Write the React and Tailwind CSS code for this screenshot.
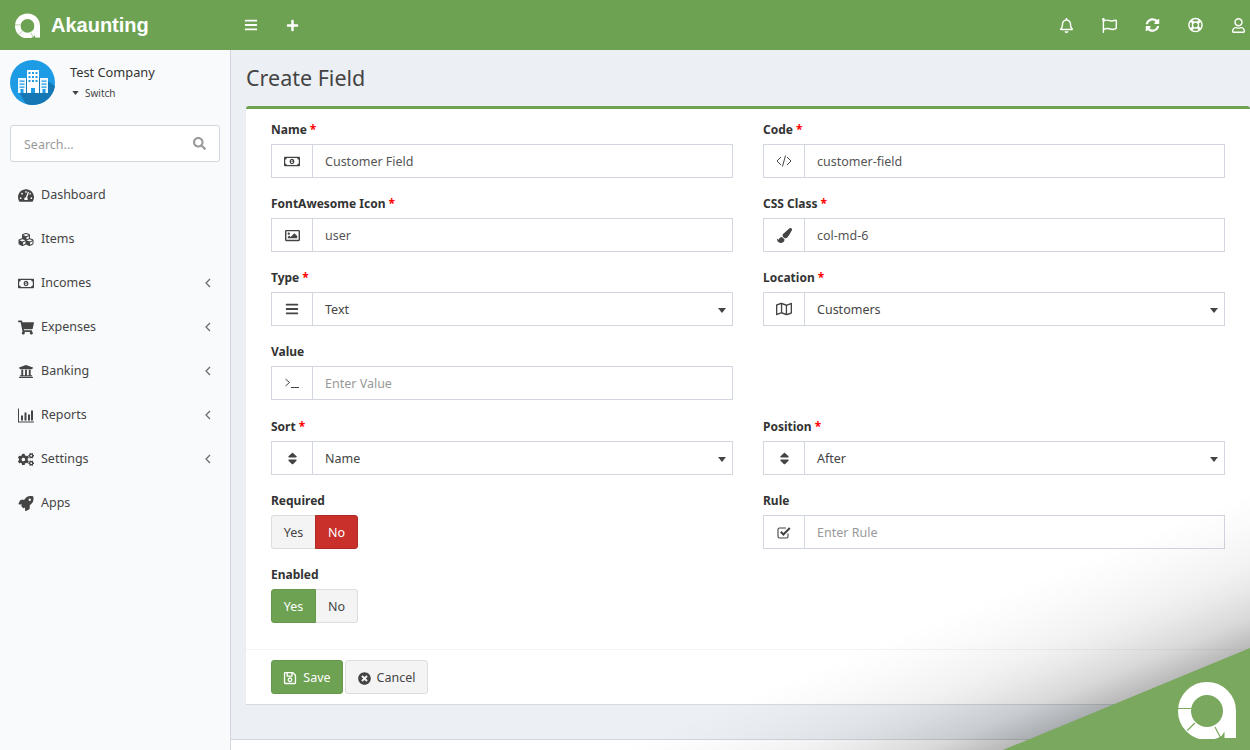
import {
  FaBars, FaPlus, FaRegBell, FaRegFlag, FaSyncAlt, FaRegLifeRing, FaRegUser, FaSearch,
  FaTachometerAlt, FaCubes, FaRegMoneyBillAlt, FaShoppingCart, FaUniversity, FaCogs, FaRocket,
  FaRegImage, FaPaintBrush, FaRegMap, FaSort, FaRegSave, FaTimesCircle,
} from "react-icons/fa";

function ChartIcon({ className }) {
  return (
    <svg viewBox="0 0 16 14" fill="currentColor" className={className}>
      <path d="M0 0h1v13h15v1H0zM3 7h2v5H3zM6.500 4h2v8h-2zM10 6h2v6h-2zM13 2h2v10h-2z" />
    </svg>
  );
}

function CodeIcon({ className }) {
  return (
    <svg viewBox="0 0 16 12" fill="none" stroke="currentColor" strokeWidth="1" className={className}>
      <path d="M5 2 1 6l4 4M11 2l4 4-4 4M9.500 0.500l-3 11" />
    </svg>
  );
}

function TerminalIcon({ className }) {
  return (
    <svg viewBox="0 0 14 10" fill="none" stroke="currentColor" strokeWidth="1" className={className}>
      <path d="M0.500 1 4.500 4.500l-4 3.500M6 9.500h8" />
    </svg>
  );
}

function CheckSquareIcon({ className }) {
  return (
    <svg viewBox="0 0 14 13" fill="none" stroke="currentColor" className={className}>
      <path d="M11 7.500V10.500a1.500 1.500 0 0 1-1.500 1.500h-7A1.500 1.500 0 0 1 1 10.500v-7A1.500 1.500 0 0 1 2.500 2H9" strokeWidth="1.100" />
      <path d="m3.800 5.800 2.600 2.700L12.800 2" strokeWidth="2" />
    </svg>
  );
}

function Caret({ className }) {
  return (
    <svg viewBox="0 0 8 5" fill="currentColor" className={className}>
      <path d="M0 0h8L4 5z" />
    </svg>
  );
}

function Chevron() {
  return (
    <svg viewBox="0 0 6 10" fill="none" stroke="#666" strokeWidth="1.200" className="h-[10px] w-[6px]">
      <path d="M5 1 1 5l4 4" />
    </svg>
  );
}

const MENU = [
  { label: "Dashboard", icon: FaTachometerAlt },
  { label: "Items", icon: FaCubes },
  { label: "Incomes", icon: FaRegMoneyBillAlt, more: true },
  { label: "Expenses", icon: FaShoppingCart, more: true },
  { label: "Banking", icon: FaUniversity, more: true },
  { label: "Reports", icon: ChartIcon, more: true },
  { label: "Settings", icon: FaCogs, more: true },
  { label: "Apps", icon: FaRocket },
];

function Logo({ className, cut }) {
  return (
    <svg viewBox="0 0 58 58" className={className}>
      <circle cx="29" cy="30" r="22.500" fill="none" stroke="#fff" strokeWidth="13" />
      <path d="M45 30h13v27H45z" fill="#fff" />
      <path d="M0 27.500h13M9.300 49.500l7.500-7.500M37 46l5.500 10.500" stroke={cut} strokeWidth="1.200" fill="none" />
      <path d="M41.500 58l5-7.500V58z" fill={cut} />
    </svg>
  );
}

function CompanyAvatar() {
  return (
    <svg viewBox="0 0 45 45" className="h-[45px] w-[45px] shrink-0">
      <circle cx="22.500" cy="22.500" r="22.500" fill="#1d9be4" />
      <path d="M8 30 24 10l6 8 9 4 6 4a22.500 22.500 0 0 1-22 19q-3 0-7-1z" fill="#1577b4" />
      <path d="M8 18h8v15H8zM30 18h8v15h-8z" fill="#eef7fd" />
      <path d="M17 10h12v23H17z" fill="#fff" />
      <path d="M18.500 12h2v2h-2zM22 12h2v2h-2zM25.500 12h2v2h-2zM18.500 16h2v2h-2zM22 16h2v2h-2zM25.500 16h2v2h-2zM18.500 20h2v2h-2zM22 20h2v2h-2zM25.500 20h2v2h-2z" fill="#1d9be4" />
      <path d="M21 28h4v5h-4zM10.500 29h3v4h-3zM32.500 29h3v4h-3zM9.500 20.500h5v1.200h-5zM9.500 23.500h5v1.200h-5zM9.500 26.500h5v1.200h-5zM31.500 20.500h5v1.200h-5zM31.500 23.500h5v1.200h-5zM31.500 26.500h5v1.200h-5z" fill="#1d9be4" />
    </svg>
  );
}

function Label({ text, required }) {
  return (
    <div className="mb-[5px] h-5 pt-px text-[12px] leading-5 font-bold text-[#333]">
      {text}
      {required && <span className="ml-[3px] text-[#f00]">*</span>}
    </div>
  );
}

function Field({ label, required, icon: Icon, iconClass = "h-[15px] w-[15px]", value, placeholder, select }) {
  return (
    <div className="mb-[15px]">
      <Label text={label} required={required} />
      <div className="flex h-[34px] border border-[#d2d6de] bg-white">
        <span className="flex w-[41px] shrink-0 items-center justify-center border-r border-[#d2d6de] text-[#444]">
          <Icon className={iconClass} />
        </span>
        {select ? (
          <div className="flex flex-1 items-center justify-between pt-[2px] pr-[6px] pl-3 text-[12.500px] text-[#444]">
            {value}
            <Caret className="h-[5px] w-[8px] text-[#444]" />
          </div>
        ) : (
          <input
            readOnly
            value={value ?? ""}
            placeholder={placeholder}
            className="min-w-0 flex-1 bg-transparent px-3 pt-[2px] text-[12.500px] text-[#555] outline-none placeholder:text-[#999]"
          />
        )}
      </div>
    </div>
  );
}

function Toggle({ label, on }) {
  return (
    <div className="mb-[15px]">
      <Label text={label} />
      <div className="flex h-[34px] w-[87px] text-[12.500px]">
        <span
          className={
            on
              ? "flex w-[45px] items-center justify-center rounded-l-[3px] border border-[#65974c] bg-[#6da252] pt-[2px] text-white"
              : "flex w-[44px] items-center justify-center rounded-l-[3px] border border-r-0 border-[#ddd] bg-[#f4f4f4] pt-[2px] text-[#444]"
          }
        >
          Yes
        </span>
        <span
          className={
            on
              ? "flex flex-1 items-center justify-center rounded-r-[3px] border border-l-0 border-[#ddd] bg-[#f4f4f4] pt-[2px] text-[#444]"
              : "flex flex-1 items-center justify-center rounded-r-[3px] border border-[#ac2925] bg-[#c9302c] pt-[2px] text-white"
          }
        >
          No
        </span>
      </div>
    </div>
  );
}

export default function App() {
  return (
    <div
      className="relative flex h-[750px] flex-col overflow-hidden bg-[#ecf0f5] text-[12.500px] text-[#444]"
      style={{ fontFamily: '"Noto Sans", sans-serif' }}
    >
      <header className="flex h-[50px] shrink-0 items-center bg-[#6da252] text-white">
        <div className="flex w-[230px] items-center pl-[15px]">
          <Logo className="h-[25px] w-[25px]" cut="#6da252" />
          <span className="ml-[11px] text-[20px] font-bold" style={{ fontFamily: '"Liberation Sans", sans-serif' }}>
            Akaunting
          </span>
        </div>
        <FaBars className="ml-[14px] text-[14px]" />
        <FaPlus className="ml-[28px] text-[13px]" />
        <div className="ml-auto flex items-center gap-[28px] pr-[4px]">
          <FaRegBell className="w-[15px] text-[15px]" />
          <FaRegFlag className="w-[15px] text-[15px]" />
          <FaSyncAlt className="w-[15px] text-[14px]" />
          <FaRegLifeRing className="w-[15px] text-[16px]" />
          <FaRegUser className="w-[15px] text-[15px]" />
        </div>
      </header>

      <div className="flex min-h-0 flex-1">
        <aside className="w-[231px] shrink-0 border-r border-[#d2d6de] bg-[#f9fafc]">
          <div className="flex px-[10px] pt-[10px]">
            <CompanyAvatar />
            <div className="ml-[15px]">
              <div className="mt-[2px] h-5 text-[12.800px] leading-5 text-[#333]">Test Company</div>
              <div className="mt-px flex items-center text-[10px] leading-5">
                <Caret className="mr-[6px] ml-[2px] h-[4px] w-[7px]" />
                Switch
              </div>
            </div>
          </div>
          <div className="mx-[10px] mt-[20px] flex h-[37px] items-center justify-between rounded-[3px] border border-[#d2d6de] bg-white px-[13px]">
            <span className="pt-[3px] text-[12.500px] text-[#999]">Search...</span>
            <FaSearch className="text-[13px] text-[#999]" />
          </div>
          <nav className="mt-[11px]">
            {MENU.map((item) => (
              <div key={item.label} className="flex h-[44px] items-center pr-[19px] pl-[18px]">
                <span className="flex w-[23px] shrink-0">
                  <item.icon className="h-[15px] w-[16px] text-[#444]" />
                </span>
                <span className="flex-1">{item.label}</span>
                {item.more && <Chevron />}
              </div>
            ))}
          </nav>
        </aside>

        <main className="flex min-w-0 flex-1 flex-col">
          <div className="flex-1 pl-[15px]">
            <h1 className="flex h-[56px] items-center text-[21.500px] text-[#444]">Create Field</h1>
            <div className="rounded-t-[3px] border-t-[3px] border-[#6da252] bg-white shadow-[0_1px_1px_rgba(0,0,0,0.1)]">
              <div className="grid grid-cols-[462px_462px] gap-x-[30px] px-[25px] pt-[10px] pb-[11px]">
                <Field label="Name" required icon={FaRegMoneyBillAlt} iconClass="h-[15px] w-[16px]" value="Customer Field" />
                <Field label="Code" required icon={CodeIcon} iconClass="h-[12px] w-[16px]" value="customer-field" />
                <Field label="FontAwesome Icon" required icon={FaRegImage} value="user" />
                <Field label="CSS Class" required icon={FaPaintBrush} value="col-md-6" />
                <Field label="Type" required icon={FaBars} iconClass="h-[14px] w-[14px]" value="Text" select />
                <Field label="Location" required icon={FaRegMap} iconClass="h-[16px] w-[16px]" value="Customers" select />
                <Field label="Value" icon={TerminalIcon} iconClass="h-[10px] w-[14px]" placeholder="Enter Value" />
                <div className="h-[75px]" />
                <Field label="Sort" required icon={FaSort} value="Name" select />
                <Field label="Position" required icon={FaSort} value="After" select />
                <Toggle label="Required" />
                <Field label="Rule" icon={CheckSquareIcon} iconClass="h-[13px] w-[14px]" placeholder="Enter Rule" />
                <Toggle label="Enabled" on />
              </div>
              <div className="flex gap-[2px] border-t border-[#f4f4f4] px-[25px] py-[10px]">
                <span className="flex h-[34px] w-[72px] items-center justify-center gap-[6px] rounded-[3px] border border-[#65974c] bg-[#6da252] pt-[2px] text-white">
                  <FaRegSave className="text-[14px]" />
                  Save
                </span>
                <span className="flex h-[34px] w-[83px] items-center justify-center gap-[6px] rounded-[3px] border border-[#ddd] bg-[#f4f4f4] pt-[2px]">
                  <FaTimesCircle className="text-[13px]" />
                  Cancel
                </span>
              </div>
            </div>
          </div>
          <footer className="h-[11px] shrink-0 border-t border-[#d2d6de] bg-white" />
        </main>
      </div>

      {/* corner decoration, lies over the card */}
      <svg viewBox="0 0 620 260" className="pointer-events-none absolute right-0 bottom-0 h-[260px] w-[620px]">
        <defs>
          <linearGradient id="fade" gradientUnits="userSpaceOnUse" x1="220" y1="165" x2="275" y2="300">
            <stop offset="0" stopColor="#000" stopOpacity="0" />
            <stop offset="0.22" stopColor="#000" stopOpacity="0.02" />
            <stop offset="0.46" stopColor="#000" stopOpacity="0.05" />
            <stop offset="0.6" stopColor="#000" stopOpacity="0.085" />
            <stop offset="0.8" stopColor="#000" stopOpacity="0.15" />
            <stop offset="1" stopColor="#000" stopOpacity="0.28" />
          </linearGradient>
        </defs>
        <rect width="620" height="260" fill="url(#fade)" />
        <path d="M373 260 620 158v102z" fill="#79a85e" />
      </svg>
      <Logo className="pointer-events-none absolute top-[681px] left-[1178px] h-[58px] w-[58px]" cut="#79a85e" />
    </div>
  );
}
